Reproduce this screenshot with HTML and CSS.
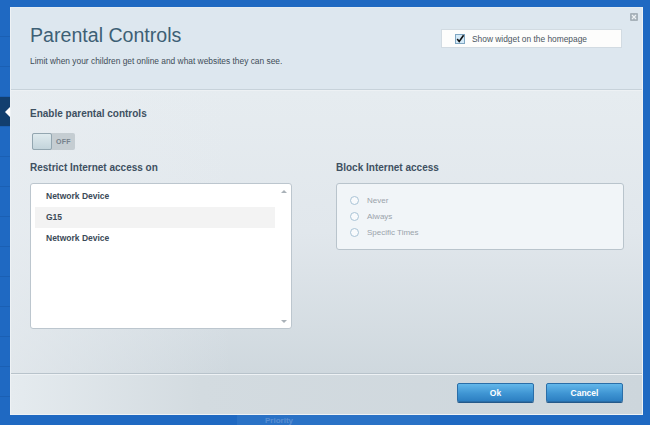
FILE: index.html
```html
<!DOCTYPE html>
<html>
<head>
<meta charset="utf-8">
<link rel="stylesheet" href="styles.css">
</head>
<body>
<div class="screen">
  <div class="behind"><span class="behind-text">Priority</span></div>
  <nav class="nav">
    <div class="nav-item"></div>
    <div class="nav-item"></div>
    <div class="nav-item"></div>
    <div class="nav-item selected"><span class="pointer"></span></div>
    <div class="nav-item"></div>
    <div class="nav-item"></div>
    <div class="nav-item"></div>
    <div class="nav-item"></div>
    <div class="nav-item"></div>
    <div class="nav-item"></div>
    <div class="nav-item"></div>
    <div class="nav-item"></div>
    <div class="nav-item"></div>
  </nav>
  <div class="dialog">
    <svg class="close" width="8" height="8" viewBox="0 0 8 8">
      <rect x="0" y="0" width="8" height="8" rx="1" fill="#a7b2ba"/>
      <path d="M2 2 L6 6 M6 2 L2 6" stroke="#eef2f5" stroke-width="1.2"/>
    </svg>
    <header class="header">
      <div class="title-block">
        <h1 class="title">Parental Controls</h1>
        <p class="subtitle">Limit when your children get online and what websites they can see.</p>
      </div>
      <div class="widget">
        <svg class="check" width="10" height="10" viewBox="0 0 10 10">
          <rect x="0.5" y="0.5" width="9" height="9" fill="#d4eaf8" stroke="#7fa6c2"/>
          <path d="M2.2 5 L4.2 7.4 L8.6 1.2" fill="none" stroke="#111" stroke-width="1.6"/>
        </svg>
        <span>Show widget on the homepage</span>
      </div>
    </header>
    <main class="content">
      <div class="label">Enable parental controls</div>
      <div class="toggle">
        <span class="knob"></span>
        <span class="off">OFF</span>
      </div>
      <div class="columns">
        <section class="col-left">
          <div class="label">Restrict Internet access on</div>
          <div class="listbox">
            <ul class="list">
              <li class="row">Network Device</li>
              <li class="row hl">G15</li>
              <li class="row">Network Device</li>
            </ul>
            <div class="scroll">
              <span class="arrow up"></span>
              <span class="arrow down"></span>
            </div>
          </div>
        </section>
        <section class="col-right">
          <div class="label">Block Internet access</div>
          <div class="radios">
            <div class="radio-row"><span class="radio"></span>Never</div>
            <div class="radio-row"><span class="radio"></span>Always</div>
            <div class="radio-row"><span class="radio"></span>Specific Times</div>
          </div>
        </section>
      </div>
    </main>
    <footer class="footer">
      <button class="btn">Ok</button>
      <button class="btn">Cancel</button>
    </footer>
  </div>
</div>
</body>
</html>
```
FILE: styles.css
```css
* { box-sizing: border-box; }
html, body { margin: 0; padding: 0; }
body {
  font-family: "Liberation Sans", Arial, sans-serif;
  background: #1f69c2;
}
.screen {
  position: relative;
  width: 650px;
  height: 425px;
  overflow: hidden;
  background: #1f69c2;
  display: flex;
}
.behind {
  position: absolute;
  left: 237px;
  top: 414px;
  width: 193px;
  height: 11px;
  background: #2a72c6;
  padding-left: 28px;
}
.behind-text {
  display: block;
  font-size: 8px;
  line-height: 11px;
  padding-top: 1px;
  font-weight: bold;
  color: #5a8fd2;
}
.nav {
  width: 10px;
  padding-top: 7px;
  display: flex;
  flex-direction: column;
}
.nav-item {
  height: 30px;
  border-bottom: 1px solid #1b60b4;
  position: relative;
  flex-shrink: 0;
}
.nav-item.selected {
  background: #123f6f;
}
.pointer {
  position: absolute;
  right: 0;
  top: 10px;
  width: 0;
  height: 0;
  border-top: 5px solid transparent;
  border-bottom: 5px solid transparent;
  border-right: 5px solid #ffffff;
}
.dialog {
  position: relative;
  width: 633px;
  height: 408px;
  margin-top: 7px;
  display: flex;
  flex-direction: column;
  border: 1px solid #eef2f5;
  border-top-color: #e4ecf2;
  background: #e4eaef;
}
.close {
  position: absolute;
  top: 5px;
  right: 4px;
}
.header {
  height: 82px;
  flex-shrink: 0;
  background: #dde7ef;
  border-bottom: 1px solid #c7d2da;
  padding: 15px 20px 0 19px;
  display: flex;
  justify-content: space-between;
  align-items: flex-start;
}
.title {
  margin: 0;
  font-size: 19.6px;
  line-height: 24px;
  font-weight: normal;
  color: #3d5f75;
}
.subtitle {
  margin: 8px 0 0;
  font-size: 8.4px;
  line-height: 12px;
  color: #3d4c58;
}
.widget {
  margin-top: 6px;
  width: 181px;
  height: 19px;
  background: #fdfdfc;
  border: 1px solid #d2dbe2;
  display: flex;
  align-items: center;
  padding-left: 13px;
  gap: 7px;
  font-size: 8.4px;
  color: #4a5560;
}
.content {
  flex: 1;
  border-top: 1px solid #edf1f4;
  padding: 16px 18px 0 19px;
  background:
    linear-gradient(to right, rgba(232,237,241,0.7) 0%, rgba(232,237,241,0) 35%),
    linear-gradient(to bottom, #e6ecf0 0%, #e1e7ec 50%, #cfd8de 100%);
}
.label {
  font-size: 10px;
  line-height: 14px;
  font-weight: bold;
  color: #3e5061;
}
.toggle {
  margin: 12px 0 0 2px;
  width: 43px;
  height: 17px;
  display: flex;
  background: #c5cdd2;
  border-radius: 2px;
}
.knob {
  width: 20px;
  height: 17px;
  background: linear-gradient(to bottom, #dfeaee, #c3d4db);
  border: 1px solid #93a6b0;
  border-radius: 2px;
}
.off {
  flex: 1;
  text-align: center;
  font-size: 7px;
  line-height: 17px;
  font-weight: bold;
  color: #76828c;
  letter-spacing: 0.3px;
}
.columns {
  margin-top: 11px;
  display: flex;
  gap: 44px;
}
.col-left { width: 262px; }
.col-right { width: 288px; }
.col-left .label, .col-right .label { margin-bottom: 8px; }
.listbox {
  height: 146px;
  background: #ffffff;
  border: 1px solid #bcc6ce;
  border-radius: 3px;
  display: flex;
  padding: 2px 0 0 4px;
}
.list {
  list-style: none;
  margin: 0;
  padding: 0;
  flex: 1;
}
.row {
  height: 21px;
  line-height: 21px;
  padding-left: 11px;
  font-size: 8.5px;
  font-weight: bold;
  color: #3b4a58;
}
.row.hl { background: #f3f3f3; }
.scroll {
  width: 16px;
  position: relative;
}
.arrow {
  position: absolute;
  left: 6px;
  width: 0;
  height: 0;
  border-left: 3px solid transparent;
  border-right: 3px solid transparent;
}
.arrow.up { top: 4px; border-bottom: 3px solid #a9b1b8; }
.arrow.down { bottom: 5px; border-top: 3px solid #a9b1b8; }
.radios {
  height: 67px;
  background: #f1f5f8;
  border: 1px solid #b9c4cc;
  border-radius: 3px;
  padding: 8px 0 0 13px;
}
.radio-row {
  height: 16px;
  display: flex;
  align-items: center;
  gap: 8px;
  font-size: 8px;
  color: #9aa3ab;
}
.radio {
  width: 9px;
  height: 9px;
  border-radius: 50%;
  border: 1px solid #a9c3d6;
  background: #f8fafc;
}
.footer {
  height: 41px;
  flex-shrink: 0;
  border-top: 1px solid #b8c3cb;
  box-shadow: inset 0 1px 0 #eef2f5;
  background: linear-gradient(to right, #e5ebef 0%, #d3dbe0 30%, #cdd6dc 100%);
  display: flex;
  justify-content: flex-end;
  align-items: flex-start;
  padding: 9px 19px 0 0;
  gap: 12px;
}
.btn {
  width: 77px;
  height: 19px;
  border: 1px solid #2a6ea8;
  border-radius: 2px;
  background: linear-gradient(to bottom, #63b7ea 0%, #3f95d3 55%, #2c7fc2 100%);
  box-shadow: 0 1px 0 #24598a;
  color: #ffffff;
  font-family: "Liberation Sans", Arial, sans-serif;
  font-size: 8.5px;
  font-weight: bold;
  padding: 0;
}
```
